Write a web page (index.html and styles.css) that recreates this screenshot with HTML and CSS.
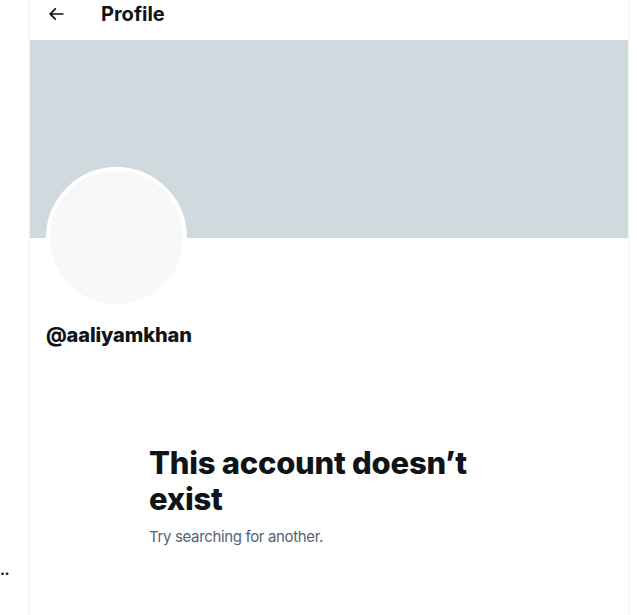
FILE: index.html
```html
<!DOCTYPE html>
<html lang="en">
<head>
<meta charset="utf-8">
<title>Profile</title>
<link rel="stylesheet" href="styles.css">
</head>
<body>
<div class="page">
  <aside class="sidebar"><span class="trunc">..</span></aside>
  <main class="main">
    <header class="topbar">
      <span class="back">
        <svg viewBox="0 0 24 24" width="20" height="20" aria-hidden="true"><path d="M7.414 13l5.043 5.04-1.414 1.42L3.586 12l7.457-7.46 1.414 1.42L7.414 11H21v2H7.414z"/></svg>
      </span>
      <h1 class="title">Profile</h1>
    </header>
    <div class="banner"></div>
    <div class="profile">
      <div class="avatar"></div>
      <div class="handle">@aaliyamkhan</div>
    </div>
    <section class="empty">
      <h2 class="empty-title">This account doesn’t exist</h2>
      <p class="empty-sub">Try searching for another.</p>
    </section>
  </main>
</div>
</body>
</html>
```

FILE: styles.css
```css
* { box-sizing: border-box; }
html, body { margin: 0; padding: 0; background: #fff; }
body {
  font-family: "Inter", "Liberation Sans", sans-serif;
  color: #0f1419;
  overflow: hidden;
}
.page { display: flex; height: 615px; }
.sidebar {
  width: 29px;
  flex: none;
  padding-top: 560px;
  overflow: hidden;
}
.trunc {
  display: block;
  font-size: 15px;
  font-weight: 700;
  line-height: 20px;
  letter-spacing: -0.5px;
}
.main {
  width: 600px;
  flex: none;
  border-left: 1px solid #eff3f4;
  border-right: 1px solid #eff3f4;
  background: #fff;
}
.topbar {
  height: 40px;
  display: flex;
  align-items: center;
  padding-left: 16px;
}
.back {
  width: 20px;
  height: 20px;
  margin-top: -12px;
  display: flex;
}
.back svg { fill: #0f1419; }
.title {
  margin: -12px 0 0 35px;
  font-size: 20px;
  font-weight: 700;
  line-height: 24px;
}
.banner {
  height: 198px;
  background: #cfd9de;
}
.profile { padding: 0 16px; }
.avatar {
  width: 141px;
  height: 141px;
  margin-top: -71px;
  border-radius: 50%;
  background: #f7f9f9;
  border: 4px solid #fff;
}
.handle {
  margin-top: 15px;
  font-size: 20px;
  font-weight: 800;
  line-height: 24px;
  letter-spacing: -0.1px;
}
.empty {
  margin: 98px 0 0 119px;
  width: 340px;
}
.empty-title {
  margin: 0;
  font-size: 31px;
  font-weight: 800;
  line-height: 36px;
  letter-spacing: -0.25px;
}
.empty-sub {
  margin: 10px 0 0;
  font-size: 15px;
  line-height: 20px;
  letter-spacing: -0.35px;
  color: #536471;
}
```
